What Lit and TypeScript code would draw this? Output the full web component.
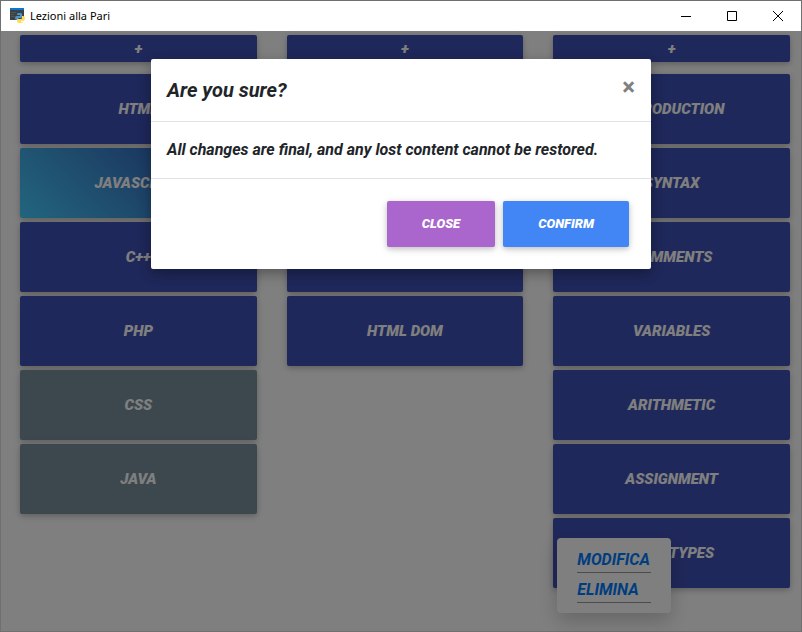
import { LitElement, html, css } from "lit";
import { customElement, property } from "lit/decorators.js";
import { classMap } from "lit/directives/class-map.js";

type Lesson = { name: string; tone?: "active" | "muted"; menu?: boolean };

const columns: Lesson[][] = [
  [
    { name: "HTML" },
    { name: "JAVASCRIPT", tone: "active" },
    { name: "C++" },
    { name: "PHP" },
    { name: "CSS", tone: "muted" },
    { name: "JAVA", tone: "muted" },
  ],
  [{ name: "" }, { name: "" }, { name: "" }, { name: "HTML DOM" }],
  [
    { name: "INTRODUCTION" },
    { name: "SYNTAX" },
    { name: "COMMENTS" },
    { name: "VARIABLES" },
    { name: "ARITHMETIC" },
    { name: "ASSIGNMENT" },
    { name: "DATA TYPES", menu: true },
  ],
];

@customElement("title-bar")
class TitleBar extends LitElement {
  static styles = css`
    :host {
      display: flex;
      justify-content: space-between;
      height: 30px;
      background: #fff;
      color: #000;
      font: 11px/30px "Noto Sans", "Open Sans", sans-serif;
    }
    .name {
      display: flex;
      align-items: center;
      gap: 4px;
      padding-left: 9px;
    }
    .controls {
      display: flex;
    }
    button {
      width: 46px;
      height: 30px;
      padding: 0;
      border: 0;
      background: none;
      display: grid;
      place-items: center;
    }
    svg {
      display: block;
    }
  `;
  render() {
    return html`
      <div class="name">
        <svg width="16" height="16" viewBox="0 0 16 16" aria-hidden="true">
          <path fill="#3a4245" d="M0 2h14v10H0z" />
          <path fill="#0b77cf" d="M0 0h14v2H0z" />
          <path stroke="#4c5a50" d="M1 4.5h5M1 6.5h3M1 8.5h4" />
          <path fill="#4f94cc" d="M7 6q0-1 2-1h1q2 0 2 1v3q0 1-1 1H9q-1 0-1 2H7q-2 0-2-2 0-2 2-2h3V7H7z" />
          <path fill="#ffdc58" d="M12 8h1q2 0 2 2 0 3-2 3h-2v1h2q0 1-2 1h-1q-3 0-3-1v-2q0-1 1-1h3q1 0 1-1z" />
        </svg>
        <span>Lezioni alla Pari</span>
      </div>
      <div class="controls">
        <button aria-label="Minimize">
          <svg width="10" height="10" shape-rendering="crispEdges"><path stroke="#000" d="M0 5.5h10" /></svg>
        </button>
        <button aria-label="Maximize">
          <svg width="10" height="10"><path fill="none" stroke="#000" d="M.5.5h9v9h-9z" /></svg>
        </button>
        <button aria-label="Close window">
          <svg width="10" height="10"><path stroke="#000" d="M0 0l10 10M10 0L0 10" /></svg>
        </button>
      </div>
    `;
  }
}

@customElement("lesson-column")
class LessonColumn extends LitElement {
  @property({ attribute: false }) lessons: Lesson[] = [];

  static styles = css`
    :host {
      display: flex;
      flex-direction: column;
      gap: 4px;
      min-width: 0;
    }
    .slot {
      position: relative;
    }
    .card {
      display: block;
      width: 100%;
      height: 70px;
      padding: 0;
      border: 0;
      border-radius: 2px;
      background: #3f51b5;
      color: #fff;
      font: italic 900 15px/22px Roboto, sans-serif;
      box-shadow: 0 2px 5px rgba(0, 0, 0, 0.16), 0 2px 10px rgba(0, 0, 0, 0.12);
    }
    .add {
      height: 27px;
      margin-bottom: 8px;
    }
    .active {
      background: linear-gradient(45deg, #45cafc, #303f9f);
    }
    .muted {
      background: #78909c;
    }
    .menu {
      position: absolute;
      top: 20px;
      left: 4px;
      display: grid;
      gap: 3px;
      box-sizing: border-box;
      width: 114px;
      padding: 8px 20px 10px;
      border-radius: 4px;
      background: #fff;
      box-shadow: 0 8px 20px rgba(0, 0, 0, 0.2);
    }
    .menu a {
      height: 26px;
      border-bottom: 1px solid #999;
      color: #007bff;
      font: italic bold 16px/28px Roboto, sans-serif;
      text-decoration: none;
    }
  `;
  render() {
    return html`
      <button class="card add" aria-label="Add">+</button>
      ${this.lessons.map(
        (l) => html`<div class="slot">
          <button class=${classMap({ card: true, active: l.tone === "active", muted: l.tone === "muted" })}>
            ${l.name}
          </button>
          ${l.menu
            ? html`<nav class="menu"><a href="#modifica">MODIFICA</a><a href="#elimina">ELIMINA</a></nav>`
            : ""}
        </div>`
      )}
    `;
  }
}

@customElement("confirm-dialog")
class ConfirmDialog extends LitElement {
  static styles = css`
    :host {
      display: block;
      width: 100%;
      max-width: 500px;
      border-radius: 2px;
      background: #fff;
      color: #212529;
      font: italic bold 16px/24px Roboto, sans-serif;
      box-shadow: 0 5px 11px rgba(0, 0, 0, 0.18), 0 4px 15px rgba(0, 0, 0, 0.15);
    }
    header {
      display: flex;
      justify-content: space-between;
      padding: 16px;
      border-bottom: 1px solid #dee2e6;
    }
    h4 {
      margin: 0;
      font-size: 20px;
      line-height: 30px;
    }
    .dismiss {
      height: 24px;
      padding: 0;
      border: 0;
      background: none;
      color: #808080;
      font: bold 24px/24px Roboto, sans-serif;
    }
    p {
      margin: 0;
      padding: 16px;
    }
    footer {
      display: flex;
      justify-content: flex-end;
      gap: 8px;
      padding: 22px;
      border-top: 1px solid #dee2e6;
    }
    .btn {
      height: 46px;
      padding: 0 35px;
      border: 0;
      border-radius: 2px;
      background: #4285f4;
      color: #fff;
      font: italic 900 13px/20px Roboto, sans-serif;
      box-shadow: 0 2px 5px rgba(0, 0, 0, 0.16), 0 2px 10px rgba(0, 0, 0, 0.12);
    }
    .secondary {
      background: #aa66cc;
    }
  `;
  render() {
    return html`
      <header>
        <h4>Are you sure?</h4>
        <button class="dismiss" aria-label="Dismiss">×</button>
      </header>
      <p>All changes are final, and any lost content cannot be restored.</p>
      <footer>
        <button class="btn secondary">CLOSE</button>
        <button class="btn">CONFIRM</button>
      </footer>
    `;
  }
}

@customElement("app-root")
class AppRoot extends LitElement {
  static styles = css`
    :host {
      display: flex;
      flex-direction: column;
      box-sizing: border-box;
      min-height: 100vh;
      border: 1px solid #707070;
    }
    .stage {
      position: relative;
      flex: 1;
      background: #fff;
    }
    .board {
      display: grid;
      grid-template-columns: repeat(3, minmax(0, 1fr));
      gap: 30px;
      padding: 4px 11px 16px 19px;
    }
    .overlay {
      position: absolute;
      inset: 0;
      display: flex;
      justify-content: center;
      align-items: flex-start;
      padding-top: 28px;
      background: rgba(0, 0, 0, 0.5);
    }
  `;
  render() {
    return html`
      <title-bar></title-bar>
      <main class="stage">
        <div class="board">
          ${columns.map((c) => html`<lesson-column .lessons=${c}></lesson-column>`)}
        </div>
        <div class="overlay">
          <confirm-dialog role="dialog" aria-label="Are you sure?"></confirm-dialog>
        </div>
      </main>
    `;
  }
}
